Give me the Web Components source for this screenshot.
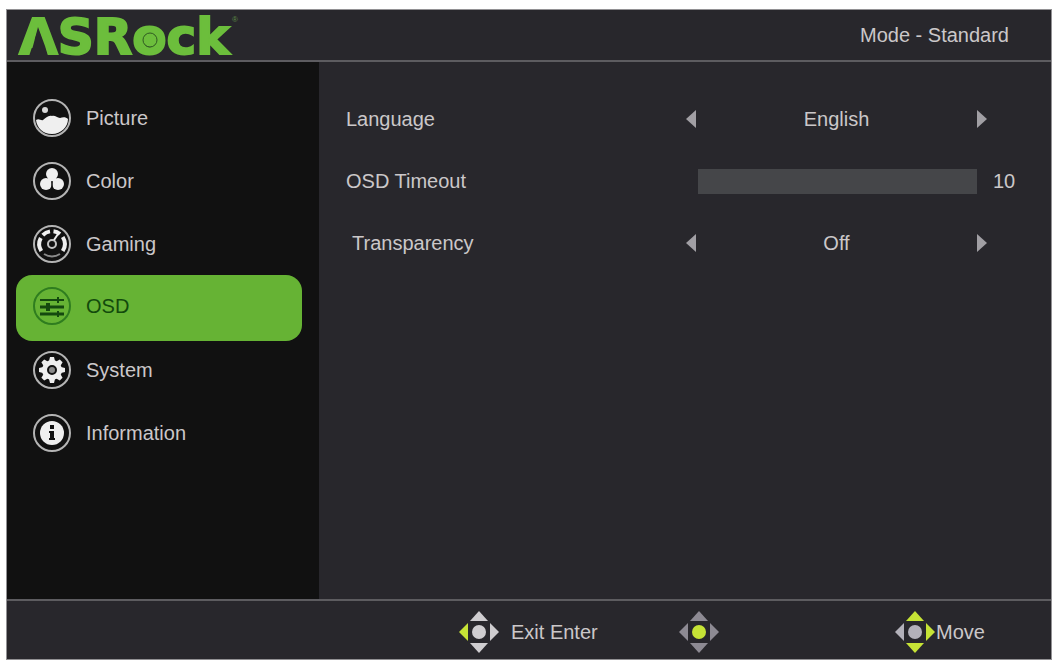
<!DOCTYPE html>
<html lang="en">
<head>
<meta charset="utf-8">
<title>Monitor OSD</title>
<style>
    body {
        box-sizing: border-box;
        margin: 0;
        padding: 9px 1px 0 6px;
        min-height: 100vh;
        display: flex;
        background: #fff;
        color: #cbc7c9;
        font: 20px/24px "Liberation Sans", Arial, sans-serif;
    }
</style>
</head>
<body>

<template id="osd-panel">
    <style>
        :host {
            flex: 1;
            display: grid;
            grid-template-rows: 50px 1fr 58px;
            border: 1px solid #929194;
            background: #28272c;
        }
        header {
            display: flex;
            align-items: center;
            justify-content: space-between;
            padding: 0 42px 0 12px;
        }
        .middle {
            display: grid;
            grid-template-columns: 312px 1fr;
            border: solid #5d5c60;
            border-width: 2px 0;
        }
        nav {
            background: #111;
            padding: 24px 17px 24px 9px;
        }
        main {
            padding: 26px 0 26px 27px;
        }
        footer {
            display: grid;
            grid-template-columns: 452fr 220fr 216fr 156fr;
            align-items: center;
            padding-top: 4px;
        }
    </style>
    <header>
        <osd-logo></osd-logo>
        <slot name="mode"></slot>
    </header>
    <div class="middle">
        <nav><slot name="menu"></slot></nav>
        <main><slot></slot></main>
    </div>
    <footer>
        <span></span>
        <slot name="hint"></slot>
    </footer>
</template>

<template id="osd-logo">
    <style>
        :host { display: block; }
        svg {
            display: block;
            overflow: visible;
        }
        text {
            font: bold 50px "DejaVu Sans", sans-serif;
            fill: #6cbe3c;
            stroke: #6cbe3c;
            stroke-width: 2;
        }
        .reg {
            font: 8px "Liberation Sans", sans-serif;
            fill: #5c8a45;
            stroke: none;
        }
    </style>
    <svg width="220" height="50" viewBox="0 0 220 50">
        <text x="0" y="44">ASRock</text>
        <text class="reg" x="213" y="12">®</text>
        <!-- open the A, ring inside the o -->
        <path d="M19 17 L26 36 L29 46 H11 L14 36 Z" fill="#28272c"/>
        <circle cx="131" cy="30" r="7" fill="#6cbe3c" stroke="#2f5a22" stroke-width="1"/>
    </svg>
</template>

<template id="osd-menu-item">
    <style>
        :host { display: block; }
        a {
            box-sizing: border-box;
            display: flex;
            align-items: center;
            gap: 15px;
            height: 63px;
            padding-left: 17px;
            color: inherit;
            text-decoration: none;
        }
        svg {
            width: 38px;
            height: 38px;
            color: #efefef;
            --ring: #b4b4b4;
            --hole: #111;
        }
        :host([active]) a {
            height: 66px;
            margin-bottom: -3px;
            padding-bottom: 4px;
            border-radius: 16px;
            background: #66b334;
            color: #124a0c;
        }
        :host([active]) svg {
            color: #14480f;
            --ring: #2f7d1f;
        }
    </style>
    <a href="#"><svg viewBox="0 0 38 38" aria-hidden="true"></svg><slot></slot></a>
</template>

<template id="osd-choice">
    <style>
        :host, .row {
            display: grid;
        }
        .row {
            grid-template-columns: 340px 1fr 64px;
            align-items: center;
            height: 62px;
        }
        :host([nested]) .name {
            padding-left: 6px;
        }
        .control {
            display: flex;
            align-items: center;
            justify-content: space-between;
        }
        button {
            display: block;
            padding: 0;
            border: 0;
            background: none;
            color: #a19fa4;
        }
        svg { display: block; }
    </style>
    <div class="row">
        <label class="name" for="value"></label>
        <div class="control">
            <button aria-label="Previous"><svg width="10" height="18"><path d="M10 0 V18 L0 9 Z" fill="currentColor"/></svg></button>
            <output id="value"></output>
            <button aria-label="Next"><svg width="10" height="18"><path d="M0 0 V18 L10 9 Z" fill="currentColor"/></svg></button>
        </div>
    </div>
</template>

<template id="osd-slider">
    <style>
        :host, .row {
            display: grid;
        }
        .row {
            grid-template-columns: 340px 1fr 64px;
            align-items: center;
            height: 62px;
        }
        input {
            appearance: none;
            height: 25px;
            margin: 0 10px 0 12px;
            background: #454649;
        }
        input::-webkit-slider-thumb {
            appearance: none;
            width: 1px;
            height: 25px;
            background: #454649;
        }
        output { padding-left: 6px; }
    </style>
    <div class="row">
        <label for="range"></label>
        <input id="range" type="range" min="10" max="60" step="10">
        <output for="range"></output>
    </div>
</template>

<template id="osd-hint">
    <style>
        :host {
            display: flex;
            align-items: center;
            gap: 12px;
            white-space: nowrap;
        }
        :host([tight]) { gap: 1px; }
        svg {
            flex: none;
            width: 40px;
            height: 42px;
            fill: var(--key, #cfcdd0);
        }
        .lit { fill: #c6e336; }
    </style>
    <svg viewBox="0 0 40 42" aria-hidden="true">
        <path data-key="up" d="M20 0 L29 10 H11 Z"/>
        <path data-key="left" d="M0 21 L9 12 V30 Z"/>
        <path data-key="right" d="M40 21 L31 12 V30 Z"/>
        <path data-key="down" d="M20 42 L29 32 H11 Z"/>
        <circle data-key="ok" cx="20" cy="21" r="7"/>
    </svg>
    <slot></slot>
</template>

<osd-panel>
    <span slot="mode">Mode - Standard</span>

    <osd-menu-item slot="menu" icon="picture">Picture</osd-menu-item>
    <osd-menu-item slot="menu" icon="color">Color</osd-menu-item>
    <osd-menu-item slot="menu" icon="gaming">Gaming</osd-menu-item>
    <osd-menu-item slot="menu" icon="osd" active>OSD</osd-menu-item>
    <osd-menu-item slot="menu" icon="system">System</osd-menu-item>
    <osd-menu-item slot="menu" icon="info">Information</osd-menu-item>

    <osd-choice label="Language" options="English,Deutsch,Italiano"></osd-choice>
    <osd-slider label="OSD Timeout" value="10"></osd-slider>
    <osd-choice label="Transparency" options="Off,On" nested></osd-choice>

    <osd-hint slot="hint" keys="left">Exit Enter</osd-hint>
    <osd-hint slot="hint" keys="ok" style="--key: #8d8a93"></osd-hint>
    <osd-hint slot="hint" keys="up right down" style="--key: #b3b1ba" tight>Move</osd-hint>
</osd-panel>

<script>
    const ring = '<circle cx="19" cy="19" r="18" fill="none" stroke="var(--ring)" stroke-width="2"/>';

    const gearTeeth = [0, 45, 90, 135, 180, 225, 270, 315]
        .map(deg => `<path d="M16 10 L17 6 H21 L22 10 Z" transform="rotate(${deg} 19 19)"/>`)
        .join('');

    const icons = {
        picture: `
            <path fill="currentColor" d="M3 21 C6 19 8 22 10 21 C13 19 15 16 19 17 C22 16 24 19 27 19 C30 18 33 18 35 20 C35 28 28 35 19 35 C10 35 4 29 3 21 Z"/>
            <circle cx="12" cy="11" r="3" fill="#d8d8d8"/>`,
        color: `
            <g fill="currentColor">
                <circle cx="19" cy="12" r="6"/>
                <circle cx="13" cy="22" r="6"/>
                <circle cx="25" cy="22" r="6"/>
                <path d="M15 15 H23 L21 20 H17 Z"/>
            </g>
            <path d="M19 19 V26" stroke="var(--hole)" stroke-width="1.500"/>`,
        gaming: `
            <g fill="none" stroke="currentColor">
                <path stroke-width="4" d="M8.300 26 A12.800 12.800 0 0 1 7.800 13 M9.800 10.200 A12.800 12.800 0 0 1 17 6.400 M20.500 6.300 A12.800 12.800 0 0 1 27 9 M29.700 12 A12.800 12.800 0 0 1 29.700 26"/>
                <circle cx="19" cy="19" r="4" stroke="#c4c4c4" stroke-width="2"/>
                <path stroke-width="2" d="M21 15 L25 9"/>
                <path stroke="#8a8a8a" stroke-width="2" d="M11 29 Q19 34 27 29"/>
            </g>`,
        osd: `
            <g fill="none" stroke="currentColor">
                <path stroke-width="2" d="M7 13 H31"/>
                <path stroke-width="3" d="M7 20 H31 M7 27 H31"/>
                <path stroke-width="2" d="M25 10 V16 M25 24 V30"/>
                <path stroke-width="4" d="M15 16 V24"/>
            </g>`,
        system: `
            <g fill="currentColor">${gearTeeth}<circle cx="19" cy="19" r="10"/></g>
            <circle cx="19" cy="19" r="4" fill="#8a8a8a" stroke="var(--hole)" stroke-width="2"/>`,
        info: `
            <circle cx="19" cy="19" r="12" fill="currentColor"/>
            <path fill="var(--hole)" d="M17 11 H21 V15 H17 Z M16 17 H21 V24 H22 V26 H16 V24 H17 V19 H16 Z"/>`
    };

    class OsdElement extends HTMLElement {
        constructor() {
            super();
            const template = document.getElementById(this.localName);
            this.attachShadow({mode: 'open'});
            this.shadowRoot.appendChild(template.content.cloneNode(true));
        }
        $(selector) {
            return this.shadowRoot.querySelector(selector);
        }
    }

    class OsdLogo extends OsdElement {}
    class OsdPanel extends OsdElement {}

    class OsdMenuItem extends OsdElement {
        connectedCallback() {
            this.$('svg').innerHTML = ring + icons[this.getAttribute('icon')];
        }
    }

    class OsdChoice extends OsdElement {
        connectedCallback() {
            this.options = this.getAttribute('options').split(',');
            this.index = 0;
            this.$('label').textContent = this.getAttribute('label');
            const [prev, next] = this.shadowRoot.querySelectorAll('button');
            prev.addEventListener('click', () => this.step(-1));
            next.addEventListener('click', () => this.step(1));
            this.step(0);
        }
        step(by) {
            const count = this.options.length;
            this.index = (this.index + by + count) % count;
            this.$('output').textContent = this.options[this.index];
        }
    }

    class OsdSlider extends OsdElement {
        connectedCallback() {
            const input = this.$('input');
            const output = this.$('output');
            this.$('label').textContent = this.getAttribute('label');
            input.value = this.getAttribute('value');
            output.textContent = input.value;
            input.addEventListener('input', () => {
                output.textContent = input.value;
            });
        }
    }

    class OsdHint extends OsdElement {
        connectedCallback() {
            this.getAttribute('keys').split(' ').forEach(key => {
                this.$(`[data-key="${key}"]`).classList.add('lit');
            });
        }
    }

    customElements.define('osd-logo', OsdLogo);
    customElements.define('osd-panel', OsdPanel);
    customElements.define('osd-menu-item', OsdMenuItem);
    customElements.define('osd-choice', OsdChoice);
    customElements.define('osd-slider', OsdSlider);
    customElements.define('osd-hint', OsdHint);
</script>
</body>
</html>
